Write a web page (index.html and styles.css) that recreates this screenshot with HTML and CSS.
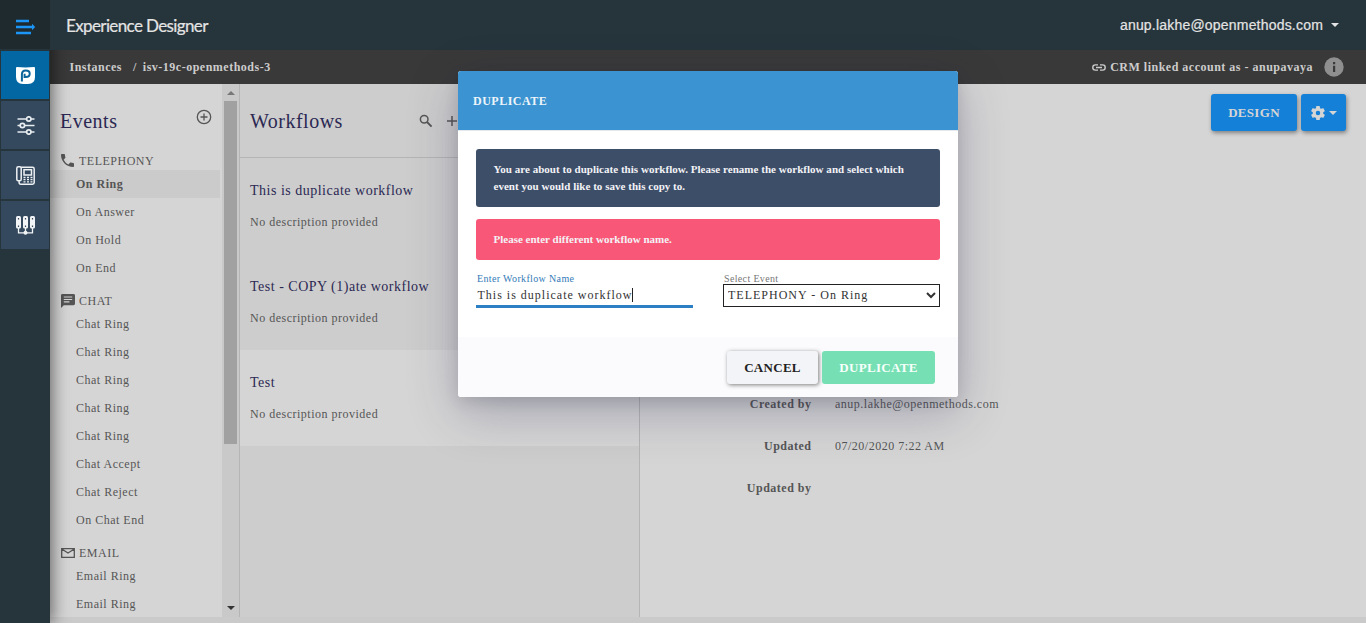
FILE: index.html
```html
<!DOCTYPE html>
<html lang="en">
<head>
<meta charset="utf-8">
<title>Experience Designer</title>
<link rel="stylesheet" href="styles.css">
</head>
<body>
<div class="app">
  <nav class="rail">
    <a class="rail-toggle"><svg width="20" height="16" viewBox="0 0 20 16"><path d="M0 2h13M0 8h17M0 14h15" stroke="#1b95f6" stroke-width="2.300"/><path d="M16 4.800l3.200 3.200L16 11.200z" fill="#1b95f6"/></svg></a>
    <a class="rail-item active"><svg width="19" height="18" viewBox="0 0 19 18"><path d="M1 0q8.500.8 17 0 1 0 1 1v9q0 7-7 7H7q-7 0-7-7V1q0-1 1-1z" fill="#fff"/><path d="M5.900 14.600V7.500Q5.900 3.600 9.800 3.600q3.900 0 3.900 3.200t-3.900 3.200H8.600V6.800" fill="none" stroke="#0a6399" stroke-width="2"/></svg></a>
    <a class="rail-item"><svg width="18" height="19" viewBox="0 0 18 19" fill="none" stroke="#e8edf1" stroke-width="1.700"><path d="M.5 3h9M14 3h3.500M.5 9.500h2.500M8 9.500h9.500M.5 16h9M14 16h3.500"/><circle cx="11.800" cy="3" r="2.200"/><circle cx="5.400" cy="9.500" r="2.200"/><circle cx="11.800" cy="16" r="2.200"/></svg></a>
    <a class="rail-item"><svg width="19" height="19" viewBox="0 0 19 19" fill="none" stroke="#eef1f4" stroke-width="1.500"><rect x=".8" y=".8" width="4.400" height="14" rx="1.500"/><path d="M5.200 1.300h11.300q1.700 0 1.700 1.700v13.500q0 1.700-1.700 1.700H4.800q-1.700 0-1.700-1.700v-1.500"/><rect x="8" y="3.700" width="7.500" height="5.300"/><path d="M7.500 11.500h2M11 11.500h2M14.500 11.500h2M7.500 13.700h2M11 13.700h2M14.500 13.700h2M7.500 15.800h2M11 15.800h2M14.500 15.800h2" stroke-width="1.300"/></svg></a>
    <a class="rail-item"><svg width="19" height="19" viewBox="0 0 19 19" fill="none" stroke="#f2f4f6"><rect x="0" y="0" width="5" height="12.500" rx="1.500" fill="#f2f4f6" stroke="none"/><rect x="7" y="0" width="5" height="12.500" rx="1.500" fill="#f2f4f6" stroke="none"/><rect x="14" y="0" width="5" height="12.500" rx="1.500" fill="#f2f4f6" stroke="none"/><path d="M2.500 12v4.800h14V12M9.500 12v6" stroke-width="1.300"/><path d="M2.500 2v1.500M9.500 2v1.500M16.500 2v1.500M2.500 9.500v1.500M9.500 9.500v1.500M16.500 9.500v1.500" stroke="#34495e" stroke-width="1.200"/><circle cx="9.500" cy="16.800" r="2" fill="#f2f4f6" stroke="none"/></svg></a>
  </nav>
  <div class="page">
    <header class="topbar">
      <span class="brand">Experience Designer</span>
      <span class="user">anup.lakhe@openmethods.com <i class="tri"></i></span>
    </header>
    <div class="crumbs">
      <span class="crumb">Instances</span><span class="sep">/</span><span>isv-19c-openmethods-3</span>
      <span class="crm"><svg width="14" height="7" viewBox="0 0 14 7" fill="none" stroke="#ccc" stroke-width="1.400"><path d="M6 .9H3.400a2.600 2.600 0 0 0 0 5.200H6M8 .9h2.600a2.600 2.600 0 0 1 0 5.200H8M4 3.500h6"/></svg>CRM linked account as - anupavaya</span>
      <svg class="info" width="20" height="20" viewBox="0 0 20 20"><circle cx="10" cy="10" r="9.700" fill="#8f8f8f"/><path d="M9 5h2.200v2.200H9zM9 8.700h2.200V15H9z" fill="#393939"/></svg>
    </div>
    <div class="columns">
      <section class="events">
        <div class="events-list">
          <div class="events-head"><h2>Events</h2><svg width="16" height="16" viewBox="0 0 16 16" fill="none" stroke="#555" stroke-width="1.300"><circle cx="8" cy="8" r="6.700"/><path d="M8 4.500v7M4.500 8h7"/></svg></div>
          <div class="group"><svg width="13" height="13" viewBox="3 3 18 18" fill="#555"><path d="M6.620 10.790a15.050 15.050 0 0 0 6.590 6.590l2.200-2.200c.27-.27.67-.36 1.020-.24 1.120.37 2.330.57 3.570.57.55 0 1 .45 1 1V20c0 .55-.45 1-1 1C10.610 21 3 13.390 3 4c0-.55.45-1 1-1h3.500c.55 0 1 .45 1 1 0 1.250.2 2.450.57 3.570.11.35.03.74-.25 1.020z"/></svg><span>TELEPHONY</span></div>
          <div class="ev on">On Ring</div><div class="ev">On Answer</div><div class="ev">On Hold</div><div class="ev">On End</div>
          <div class="group"><svg width="14" height="14" viewBox="2 2 20 20" fill="#555"><path fill-rule="evenodd" d="M20 2H4c-1.100 0-2 .9-2 2v18l4-4h14c1.100 0 2-.9 2-2V4c0-1.100-.9-2-2-2zM6 5.500v1.500h12V5.500zM6 9v1.500h12V9zM6 12.500V14h8v-1.500z"/></svg><span>CHAT</span></div>
          <div class="ev">Chat Ring</div><div class="ev">Chat Ring</div><div class="ev">Chat Ring</div><div class="ev">Chat Ring</div><div class="ev">Chat Ring</div><div class="ev">Chat Accept</div><div class="ev">Chat Reject</div><div class="ev">On Chat End</div>
          <div class="group"><svg width="14" height="10" viewBox="0 0 14 10" fill="none" stroke="#555" stroke-width="1.300"><path d="M.7.7h12.600v8.600H.7zM.7 1L7 5l6.300-4"/></svg><span>EMAIL</span></div>
          <div class="ev">Email Ring</div><div class="ev">Email Ring</div>
        </div>
        <div class="scroll"><i class="up"></i><i class="thumb"></i><i class="down"></i></div>
      </section>
      <section class="flows">
        <div class="flows-head"><h2>Workflows</h2>
          <svg class="find" width="14" height="14" viewBox="0 0 14 14" fill="none" stroke="#555"><circle cx="5.200" cy="5.200" r="3.800" stroke-width="1.500"/><path d="M8 8l4.600 4.600" stroke-width="1.900"/></svg>
          <svg width="12" height="12" viewBox="0 0 12 12" stroke="#555" stroke-width="1.500"><path d="M6 1v10M1 6h10"/></svg>
        </div>
        <div class="flow"><h3>This is duplicate workflow</h3><p>No description provided</p></div>
        <div class="flow"><h3>Test - COPY (1)ate workflow</h3><p>No description provided</p></div>
        <div class="flow light"><h3>Test</h3><p>No description provided</p></div>
      </section>
      <section class="detail">
        <div class="actions">
          <button class="blue design">DESIGN</button>
          <button class="blue gear"><svg width="14" height="14" viewBox="2.500 2 19 20" fill="#d5d5d5"><path d="M19.430 12.980c.04-.32.07-.64.07-.98s-.03-.66-.07-.98l2.110-1.650c.19-.15.24-.42.12-.64l-2-3.460c-.12-.22-.39-.3-.61-.22l-2.490 1c-.52-.4-1.080-.73-1.690-.98l-.38-2.650A.49.490 0 0 0 14 2h-4c-.25 0-.46.18-.49.42l-.38 2.650c-.61.25-1.170.59-1.690.98l-2.490-1c-.23-.09-.49 0-.61.22l-2 3.460c-.13.22-.07.49.12.64l2.110 1.650c-.04.32-.07.65-.07.98s.03.66.07.98l-2.110 1.650c-.19.15-.24.42-.12.64l2 3.460c.12.22.39.3.61.22l2.490-1c.52.4 1.080.73 1.690.98l.38 2.650c.03.24.24.42.49.42h4c.25 0 .46-.18.49-.42l.38-2.650c.61-.25 1.170-.59 1.690-.98l2.490 1c.23.09.49 0 .61-.22l2-3.460c.12-.22.07-.49-.12-.64zM12 15.200a3.200 3.200 0 1 1 0-6.400 3.200 3.200 0 0 1 0 6.400z"/></svg><i class="tri"></i></button>
        </div>
        <dl class="meta">
          <dt>Created by</dt><dd>anup.lakhe@openmethods.com</dd>
          <dt>Updated</dt><dd>07/20/2020 7:22 AM</dd>
          <dt>Updated by</dt><dd></dd>
        </dl>
      </section>
    </div>
  </div>
  <div class="modal">
    <div class="modal-head">DUPLICATE</div>
    <div class="modal-body">
      <div class="alert navy">You are about to duplicate this workflow. Please rename the workflow and select which<br>event you would like to save this copy to.</div>
      <div class="alert pink">Please enter different workflow name.</div>
      <div class="form">
        <div class="field"><span class="label focus">Enter Workflow Name</span><div class="text">This is duplicate workflow<i class="caret"></i></div></div>
        <div class="field"><span class="label">Select Event</span><select class="select"><option>TELEPHONY - On Ring</option></select></div>
      </div>
    </div>
    <div class="modal-foot"><button class="cancel">CANCEL</button><button class="dup">DUPLICATE</button></div>
  </div>
</div>
</body>
</html>
```
FILE: styles.css
```css
* { box-sizing: border-box; }
body { margin: 0; font: 12px "Liberation Serif", serif; letter-spacing: .5px; color: #555; }
h2, h3, p, dl, dd { margin: 0; font-weight: normal; }
svg { flex: none; display: block; }
button { font-family: inherit; border: 0; padding: 0; }
.app { position: relative; display: flex; width: 1366px; height: 623px; overflow: hidden; }

.rail { width: 50px; background: #26353c; display: flex; flex-direction: column; gap: 2px; align-items: center; flex: none; padding: 0 1px; z-index: 1; box-shadow: 3px 0 16px rgba(0,0,0,.5); }
.rail-toggle { align-self: stretch; margin: 0 -1px; height: 49px; background: #1f2a2f; display: flex; align-items: center; padding: 5px 0 0 16px; }
.rail-item { width: 48px; height: 48px; background: #34495e; display: flex; align-items: center; justify-content: center; padding-left: 1px; }
.rail-item.active { background: #0267a3; padding-top: 2px; }

.page { flex: 1; display: flex; flex-direction: column; min-width: 0; background: #cacaca; padding-bottom: 6px; }
.topbar { position: relative; z-index: 2; height: 50px; flex: none; background: #26353c; display: flex; align-items: center; justify-content: space-between; padding: 0 27px 0 16px; color: #e4e4e4; }
.brand { font: 17px Lato, sans-serif; letter-spacing: -.62px; -webkit-text-stroke: .2px; }
.user { font: 14px "Liberation Sans", sans-serif; letter-spacing: .2px; display: flex; align-items: center; gap: 8px; -webkit-text-stroke: .2px; }
.tri { border: 4.500px solid transparent; border-top-color: currentColor; border-bottom: 0; }
.crumbs { height: 34px; flex: none; background: #393939; color: #ccc; font-weight: bold; display: flex; align-items: center; padding: 0 22px 0 19.500px; }
.sep { margin: 0 6px 0 11px; }
.crm { margin-left: auto; display: flex; align-items: center; gap: 4px; }
.info { margin-left: 11px; }

.columns { flex: 1; display: flex; min-height: 0; }
.events { width: 190px; display: flex; border-right: 1px solid #b5b5b5; background: #d5d5d5; }
.events-list { width: 172px; overflow: hidden; }
.events-head { height: 58px; display: flex; justify-content: space-between; padding: 25px 10.500px 0 10px; }
h2 { font-size: 20px; line-height: 25px; color: #2b2853; }
.group { height: 28px; padding: 9px 0 0 11px; display: flex; align-items: center; }
.group svg { margin-right: auto; }
.group span { width: 143px; padding-top: 1px; }
.ev { height: 28px; line-height: 28px; padding-left: 26px; margin-right: 2px; }
.ev.on { background: #cbcbcb; font-weight: bold; }
.scroll { width: 17px; background: #c9c9c9; display: flex; flex-direction: column; align-items: center; padding: 7px 0 7px; }
.up { border: 4px solid transparent; border-bottom-color: #777; border-top: 0; }
.thumb { width: 13px; height: 343px; margin-top: 6px; background: #a1a1a1; }
.down { margin-top: auto; border: 4px solid transparent; border-top-color: #333; border-bottom: 0; }

.flows { width: 400px; flex: none; background: #cdcdcd; border-right: 1px solid #b5b5b5; }
.flows-head { height: 74px; border-bottom: 1px solid #b5b5b5; display: flex; align-items: center; padding: 1px 0 0 10px; }
.find { margin: 0 13px 0 76.500px; }
.flow { height: 96px; padding: 23px 10px 0; }
.flow.light { background: #d5d5d5; }
h3 { font-size: 14px; line-height: 20px; color: #2b2853; }
.flow p { line-height: 16px; margin-top: 13px; }

.detail { flex: 1; background: #d5d5d5; }
.actions { display: flex; justify-content: flex-end; gap: 4px; padding: 10px 20px 0; }
.blue { height: 37px; background: #1580d8; color: #d5d5d5; border-radius: 3px; box-shadow: 1px 2px 4px rgba(0,0,0,.4); font-weight: bold; font-size: 13px; letter-spacing: .3px; }
.design { width: 86px; }
.gear { width: 45px; display: flex; align-items: center; justify-content: center; gap: 4px; }
.meta { display: grid; grid-template-columns: 171.500px 1fr; column-gap: 23.500px; grid-auto-rows: 42px; line-height: 42px; padding-top: 252px; }
.meta dt { text-align: right; font-weight: bold; }

.modal { position: absolute; z-index: 5; left: 458px; top: 71px; width: 500px; height: 326px; background: #fff; border-radius: 3px; box-shadow: 0 15px 50px rgba(49,49,93,.3), 0 5px 15px rgba(0,0,0,.12); display: flex; flex-direction: column; }
.modal-head { height: 60px; line-height: 60px; background: #3b94d1; border-bottom: 1px solid #e3e9ee; border-radius: 3px 3px 0 0; color: #eef4fa; font-weight: bold; padding-left: 15px; }
.modal-body { flex: 1; padding: 18px 18px 0; }
.alert { border-radius: 3px; color: #f3f3f6; font-weight: bold; font-size: 11px; line-height: 17px; letter-spacing: .03px; padding: 12px 17.500px; white-space: nowrap; }
.navy { background: #3d4e69; height: 58px; }
.pink { background: #f95778; height: 41px; margin-top: 12px; letter-spacing: 0; }
.form { display: flex; gap: 30px; margin-top: 13px; }
.field { width: 217px; }
.label { display: block; font-size: 10px; line-height: 11px; letter-spacing: .35px; padding-left: 1px; color: #777; }
.label.focus { color: #337ab7; }
.text { height: 24px; border-bottom: 3px solid #2c7fc3; color: #333; letter-spacing: 1px; line-height: 23px; padding-left: 1.500px; }
.caret { display: inline-block; width: 1px; height: 14px; background: #222; vertical-align: -3px; }
.select { display: block; width: 217px; height: 23px; border: 1px solid #222; border-radius: 0; background: #fff; font: 12px "Liberation Serif", serif; letter-spacing: 1px; color: #333; padding: 0 0 1px; }
.modal-foot { height: 60px; background: #fbfbfd; border-radius: 0 0 3px 3px; display: flex; justify-content: flex-end; gap: 4px; padding: 14px 23px 0 0; }
.modal-foot button { height: 33px; border-radius: 3px; font-weight: bold; font-size: 13px; letter-spacing: .3px; }
.modal-foot .cancel { width: 91px; background: #f3f4f7; color: #222; box-shadow: 1px 1px 4px rgba(0,0,0,.5); }
.modal-foot .dup { width: 113px; background: #76dfb3; color: #f7fffb; }
```
